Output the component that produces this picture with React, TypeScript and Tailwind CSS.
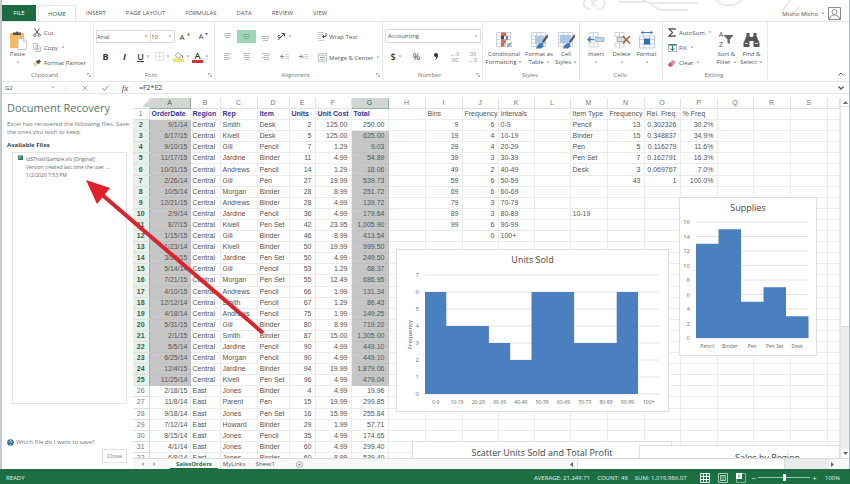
import type { ReactNode } from "react";

const UI = "font-['Open_Sans','Noto_Sans',sans-serif]";
const ARIAL = "font-['Liberation_Sans',Arial,sans-serif]";

type Order = [string, string, string, string, string, string, string];

const orders: Order[] = [
  ["9/1/14", "Central", "Smith", "Desk", "2", "125.00", "250.00"],
  ["6/17/15", "Central", "Kivell", "Desk", "5", "125.00", "625.00"],
  ["9/10/15", "Central", "Gill", "Pencil", "7", "1.29", "9.03"],
  ["11/17/15", "Central", "Jardine", "Binder", "11", "4.99", "54.89"],
  ["10/31/15", "Central", "Andrews", "Pencil", "14", "1.29", "18.06"],
  ["2/26/14", "Central", "Gill", "Pen", "27", "19.99", "539.73"],
  ["10/5/14", "Central", "Morgan", "Binder", "28", "8.99", "251.72"],
  ["12/21/15", "Central", "Andrews", "Binder", "28", "4.99", "139.72"],
  ["2/9/14", "Central", "Jardine", "Pencil", "36", "4.99", "179.64"],
  ["8/7/15", "Central", "Kivell", "Pen Set", "42", "23.95", "1,005.90"],
  ["1/15/15", "Central", "Gill", "Binder", "46", "8.99", "413.54"],
  ["1/23/14", "Central", "Kivell", "Binder", "50", "19.99", "999.50"],
  ["3/24/15", "Central", "Jardine", "Pen Set", "50", "4.99", "249.50"],
  ["5/14/14", "Central", "Gill", "Pencil", "53", "1.29", "68.37"],
  ["7/21/15", "Central", "Morgan", "Pen Set", "55", "12.49", "686.95"],
  ["4/10/15", "Central", "Andrews", "Pencil", "66", "1.99", "131.34"],
  ["12/12/14", "Central", "Smith", "Pencil", "67", "1.29", "86.43"],
  ["4/18/14", "Central", "Andrews", "Pencil", "75", "1.99", "149.25"],
  ["5/31/15", "Central", "Gill", "Binder", "80", "8.99", "719.20"],
  ["2/1/15", "Central", "Smith", "Binder", "87", "15.00", "1,305.00"],
  ["5/5/14", "Central", "Jardine", "Pencil", "90", "4.99", "449.10"],
  ["6/25/14", "Central", "Morgan", "Pencil", "90", "4.99", "449.10"],
  ["12/4/15", "Central", "Jardine", "Binder", "94", "19.99", "1,879.06"],
  ["11/25/14", "Central", "Kivell", "Pen Set", "96", "4.99", "479.04"],
  ["2/18/15", "East", "Jones", "Binder", "4", "4.99", "19.96"],
  ["11/8/14", "East", "Parent", "Pen", "15", "19.99", "299.85"],
  ["9/18/14", "East", "Jones", "Pen Set", "16", "15.99", "255.84"],
  ["7/12/14", "East", "Howard", "Binder", "29", "1.99", "57.71"],
  ["8/15/14", "East", "Jones", "Pencil", "35", "4.99", "174.65"],
  ["4/1/14", "East", "Jones", "Binder", "60", "4.99", "299.40"],
  ["6/8/14", "East", "Jones", "Binder", "60", "8.99", "539.40"],
];

const bins: [string, string, string][] = [
  ["9", "6", "0-9"],
  ["19", "4", "10-19"],
  ["29", "4", "20-29"],
  ["39", "3", "30-39"],
  ["49", "2", "40-49"],
  ["59", "6", "50-59"],
  ["69", "6", "60-69"],
  ["79", "3", "70-79"],
  ["89", "3", "80-89"],
  ["99", "6", "90-99"],
  ["", "0", "100+"],
];

const items: [string, string, string, string][] = [
  ["Pencil", "13", "0.302326", "30.2%"],
  ["Binder", "15", "0.348837", "34.9%"],
  ["Pen", "5", "0.116279", "11.6%"],
  ["Pen Set", "7", "0.162791", "16.3%"],
  ["Desk", "3", "0.069767", "7.0%"],
  ["", "43", "1", "100.0%"],
  ["", "", "", ""],
  ["", "", "", ""],
  ["10-19", "", "", ""],
];

const columns = [
  { id: "A", w: "w-[41px]" },
  { id: "B", w: "w-[30px]" },
  { id: "C", w: "w-[37px]" },
  { id: "D", w: "w-[32px]" },
  { id: "E", w: "w-[26px]" },
  { id: "F", w: "w-[36px]" },
  { id: "G", w: "w-[37px]" },
  { id: "H", w: "w-[37px]" },
  { id: "I", w: "w-[37px]" },
  { id: "J", w: "w-[36px]" },
  { id: "K", w: "w-[36px]" },
  { id: "L", w: "w-[36px]" },
  { id: "M", w: "w-[37px]" },
  { id: "N", w: "w-[37px]" },
  { id: "O", w: "w-[36px]" },
  { id: "P", w: "w-[37px]" },
  { id: "Q", w: "w-[36px]" },
  { id: "R", w: "w-[37px]" },
  { id: "S", w: "w-[37px]" },
  { id: "", w: "" },
];

const headings = [
  "OrderDate", "Region", "Rep", "Item", "Units", "Unit Cost", "Total", "",
  "Bins", "Frequency", "Intervals", "", "Item Type", "Frequency", "Rel. Freq", "% Freq",
];

function cellPadding(i: number): string {
  if (i === 0) return "pr-[2px] text-right";
  if ([4, 5, 6, 8, 9, 13, 14, 15].includes(i)) return "pr-[3px] text-right";
  return "pl-[2px]";
}

function rowCells(i: number): string[] {
  return [...orders[i], "", ...(bins[i] ?? ["", "", ""]), "", ...(items[i] ?? ["", "", "", ""]), "", "", "", ""];
}

function Caret() {
  return (
    <svg width="4" height="3" viewBox="0 0 4 3" className="shrink-0 text-[#999]" aria-hidden="true">
      <path d="M.5.5h3L2 2.300z" fill="currentColor" />
    </svg>
  );
}

function Group({ label, width, launcher = false, children }: { label: string; width: string; launcher?: boolean; children: ReactNode }) {
  return (
    <section aria-label={label} className={`flex shrink-0 flex-col border-r border-[#e9e9e9] pt-[3px] ${width}`}>
      <div className="flex h-[44px]">{children}</div>
      <div className="flex flex-1 items-center pr-[2px]">
        <span className="flex-1 text-center text-[6px] leading-[8px] text-[#777]">{label}</span>
        {launcher && (
          <svg width="4" height="4" viewBox="0 0 4 4" fill="none" stroke="#999" strokeWidth=".7" aria-hidden="true">
            <path d="M.4 2.500V.4h2.100M1.600 1.600l2 2M3.600 1.800v1.800H1.800" />
          </svg>
        )}
      </div>
    </section>
  );
}

function BigButton({ icon, lines, width, caretBelow = false }: { icon: ReactNode; lines: string[]; width: string; caretBelow?: boolean }) {
  return (
    <button type="button" className={`flex shrink-0 flex-col items-center pt-1 text-[6px] leading-[8px] text-[#555] ${width}`}>
      <span className="flex h-[21px] items-center">{icon}</span>
      {lines.map((l, i) => (
        <span key={l} className="flex items-center gap-[2px] whitespace-nowrap">
          {l}
          {!caretBelow && i === 1 && <Caret />}
        </span>
      ))}
      {caretBelow && (
        <span className="flex h-2 items-center">
          <Caret />
        </span>
      )}
    </button>
  );
}

function SmallButton({ icon, label, caret = false }: { icon: ReactNode; label: string; caret?: boolean }) {
  return (
    <button type="button" className="flex h-[15px] shrink-0 items-center gap-[3px] whitespace-nowrap text-[6px] leading-[8px] text-[#555]">
      <span className="flex w-2 justify-center">{icon}</span>
      {label}
      {caret && <Caret />}
    </button>
  );
}

function IconButton({ label, children, width = "w-[19px]", active = false }: { label: string; children: ReactNode; width?: string; active?: boolean }) {
  return (
    <button
      type="button"
      aria-label={label}
      className={`flex h-[13px] shrink-0 items-center justify-center gap-[2px] text-[#333] ${width} ${active ? "bg-[#9fd5b7]" : ""}`}
    >
      {children}
    </button>
  );
}

function Lines({ d }: { d: string }) {
  return (
    <svg width="9" height="9" viewBox="0 0 9 9" fill="none" stroke="#bbb" aria-hidden="true">
      <path d={d} />
    </svg>
  );
}

function GridIcon({ children }: { children?: ReactNode }) {
  return (
    <svg width="18" height="18" viewBox="0 0 18 18" fill="none" aria-hidden="true">
      <path d="M1.500 1.500h14v14h-14zM1.500 5h14M1.500 8.500h14M1.500 12h14M6.500 1.500v14M11 1.500v14" stroke="#c4c9ce" strokeWidth=".8" />
      {children}
    </svg>
  );
}

function Clipboard() {
  return (
    <Group label="Clipboard" width="w-[92px]" launcher>
      <BigButton
        width="w-[31px]"
        lines={["Paste"]}
        caretBelow
        icon={
          <svg width="18" height="20" viewBox="0 0 18 20" aria-hidden="true">
            <rect x="1" y="3" width="14" height="15" rx="1" fill="#f0bc6c" />
            <path d="M4 5V2.500h2.500a1.600 1.600 0 0 1 3 0H12V5z" fill="#555" />
            <path d="M9 8.500h5.500l3 3v8H9z" fill="#fff" stroke="#b8b8b8" strokeWidth=".7" />
            <path d="M14.500 8.500v3h3" fill="none" stroke="#b8b8b8" strokeWidth=".7" />
          </svg>
        }
      />
      <div className="flex flex-col">
        <SmallButton
          label="Cut"
          icon={
            <svg width="8" height="9" viewBox="0 0 8 9" fill="none" stroke="#555" aria-hidden="true">
              <path d="M1.500.5 5.500 6M6.500.5 2.500 6" />
              <circle cx="1.800" cy="7.200" r="1.200" strokeWidth=".8" />
              <circle cx="6.200" cy="7.200" r="1.200" strokeWidth=".8" />
            </svg>
          }
        />
        <SmallButton
          label="Copy"
          caret
          icon={
            <svg width="8" height="9" viewBox="0 0 8 9" fill="#fff" stroke="#aaa" strokeWidth=".7" aria-hidden="true">
              <path d="M.5.5h4v5.500h-4zM3 2.500h3l1.500 1.500v4.500H3zM4 5h2.500M4 6.700h2.500" />
            </svg>
          }
        />
        <SmallButton
          label="Format Painter"
          icon={
            <svg width="8" height="8" viewBox="0 0 8 8" aria-hidden="true">
              <path d="M0 4.500 2.500 3l2 2.500L2 8z" fill="#ecd88a" />
              <path d="m2.500 2.500 3 3L8 2.200 6.300.5z" fill="#555" />
            </svg>
          }
        />
      </div>
    </Group>
  );
}

function FontGroup() {
  return (
    <Group label="Font" width="w-[121px]" launcher>
      <div className="flex flex-col gap-[7px] pt-[5px] pl-[2px]">
        <div className="flex">
          <div className="flex h-[13px] w-[55px] items-center border border-[#ddd] pr-[2px]">
            <select aria-label="Font family" className="w-full min-w-0 appearance-none bg-transparent text-[6px] leading-[8px] text-[#555]">
              <option>Arial</option>
            </select>
            <Caret />
          </div>
          <div className="-ml-px flex h-[13px] w-[25px] items-center border border-[#ddd] pr-[2px]">
            <select aria-label="Font size" className="w-full min-w-0 appearance-none bg-transparent text-[6px] leading-[8px] text-[#555]">
              <option>10</option>
            </select>
            <Caret />
          </div>
          <IconButton label="Increase font size">
            <span className="text-[8px] leading-[8px]">A</span>
            <svg width="3" height="8" viewBox="0 0 3 8" fill="#667" aria-hidden="true"><path d="M0 2.500h3L1.500 0z" /></svg>
          </IconButton>
          <IconButton label="Decrease font size">
            <span className="text-[7px] leading-[8px]">A</span>
            <svg width="3" height="8" viewBox="0 0 3 8" fill="#667" aria-hidden="true"><path d="M0 0h3L1.500 2.500z" /></svg>
          </IconButton>
        </div>
        <div className="flex">
          <IconButton label="Bold"><span className="text-[9px] leading-[10px] font-bold">B</span></IconButton>
          <IconButton label="Italic"><span className="text-[9px] leading-[10px] font-bold italic">I</span></IconButton>
          <IconButton label="Underline"><span className="text-[9px] leading-[10px] font-semibold underline">U</span><Caret /></IconButton>
          <IconButton label="Borders">
            <svg width="9" height="9" viewBox="0 0 9 9" fill="none" stroke="#ccc" strokeDasharray="1 1" aria-hidden="true"><path d="M.5.5h8v8h-8zM4.500.5v8M.5 4.500h8" /></svg>
            <Caret />
          </IconButton>
          <IconButton label="Fill colour">
            <svg width="11" height="11" viewBox="0 0 11 11" className="shrink-0" aria-hidden="true">
              <path d="m2 4.500 3-3 3.500 3.500-3 2.500z" fill="#fff" stroke="#888" strokeWidth=".8" />
              <path d="M8.500 4c1 1 1.500 2 1 3" stroke="#555" fill="none" />
              <path d="M0 7.500h11V11H0z" fill="#efe468" />
            </svg>
            <Caret />
          </IconButton>
          <IconButton label="Font colour">
            <span className="flex h-[12px] w-[11px] shrink-0 justify-center border-b-[3px] border-[#c8343a] text-[9px] leading-[10px] font-semibold">A</span>
            <Caret />
          </IconButton>
        </div>
      </div>
    </Group>
  );
}

function Alignment() {
  return (
    <Group label="Alignment" width="w-[168px]" launcher>
      <div className="flex flex-col gap-[7px] pt-[5px] pl-[3px]">
        <div className="flex">
          <IconButton label="Top align"><Lines d="M1 1.500h7M1 3.500h7M2 5.500h5" /></IconButton>
          <IconButton label="Middle align" active>
            <svg width="9" height="9" viewBox="0 0 9 9" fill="none" stroke="#7fae95" aria-hidden="true"><path d="M1 2.500h7M1 4.500h7M2 6.500h5" /></svg>
          </IconButton>
          <IconButton label="Bottom align"><Lines d="M1 4.500h7M1 6.500h7M2 8.500h5" /></IconButton>
          <IconButton label="Orientation">
            <svg width="9" height="9" viewBox="0 0 9 9" fill="none" stroke="#555" aria-hidden="true">
              <path d="m1 8 6.500-6.500M4.500 1.500h3v3" />
              <circle cx="2" cy="4.500" r="1.200" strokeWidth=".8" />
            </svg>
            <Caret />
          </IconButton>
        </div>
        <div className="flex">
          <IconButton label="Align left"><Lines d="M1 1.500h7M1 3.500h5M1 5.500h7M1 7.500h5" /></IconButton>
          <IconButton label="Centre"><Lines d="M1 1.500h7M2 3.500h5M1 5.500h7M2 7.500h5" /></IconButton>
          <IconButton label="Align right"><Lines d="M1 1.500h7M3 3.500h5M1 5.500h7M3 7.500h5" /></IconButton>
          <IconButton label="Decrease indent">
            <svg width="9" height="7" viewBox="0 0 9 7" fill="none" stroke="#888" aria-hidden="true"><path d="M4 3.500H.8M2.500 1.500l-2 2 2 2" /><path d="M5.500 1.500H9M5.500 3.500H9M5.500 5.500H9" stroke="#ccc" /></svg>
          </IconButton>
          <IconButton label="Increase indent">
            <svg width="9" height="7" viewBox="0 0 9 7" fill="none" stroke="#888" aria-hidden="true"><path d="M0 3.500h3.500M2 1.500l2 2-2 2" /><path d="M5.500 1.500H9M5.500 3.500H9M5.500 5.500H9" stroke="#ccc" /></svg>
          </IconButton>
        </div>
      </div>
      <div className="flex flex-col gap-[6px] pt-1 pl-[5px]">
        <SmallButton
          label="Wrap Text"
          icon={
            <svg width="9" height="9" viewBox="0 0 9 9" fill="none" className="shrink-0" aria-hidden="true">
              <path d="M0 .5h6M0 2.500h5M0 4.500h3M0 6.500h3M0 8.500h6" stroke="#ccc" />
              <path d="M8 1v3.500H4.500M6 3 4.500 4.500 6 6" stroke="#555" />
            </svg>
          }
        />
        <SmallButton
          label="Merge & Center"
          caret
          icon={
            <svg width="9" height="9" viewBox="0 0 9 9" fill="none" className="shrink-0" aria-hidden="true">
              <path d="M.5.500h8v8h-8zM.5 2.500h8M.5 6.500h8M4.500.5v2M4.500 6.500v2" stroke="#bbb" strokeWidth=".8" />
              <path d="M2 4.500h5" stroke="#8aa4c0" />
            </svg>
          }
        />
      </div>
    </Group>
  );
}

function NumberGroup() {
  return (
    <Group label="Number" width="w-[100px]" launcher>
      <div className="flex flex-col gap-[7px] pt-1 pl-[2px]">
        <div className="flex h-[14px] w-[96px] items-center border border-[#ddd] px-[2px]">
          <select aria-label="Number format" className="w-full min-w-0 appearance-none bg-transparent text-[6px] leading-[8px] text-[#555]">
            <option>Accounting</option>
          </select>
          <Caret />
        </div>
        <div className="flex">
          <IconButton label="Accounting format" width="w-[22px]"><span className="text-[9px] leading-[10px] font-semibold">$</span><Caret /></IconButton>
          <IconButton label="Percent"><span className="text-[9px] leading-[10px]">%</span></IconButton>
          <IconButton label="Comma style">
            <svg width="4" height="7" viewBox="0 0 4 7" fill="#333" aria-hidden="true"><circle cx="2" cy="2" r="2" /><path d="M4 2c0 2-1 4-3 5 1-1.500 1.200-2.500 1-3.500z" /></svg>
          </IconButton>
          <IconButton label="Increase decimal">
            <span className="flex flex-col text-[5px] leading-[6px] text-[#777]"><span>←.0</span><span>.00</span></span>
          </IconButton>
          <IconButton label="Decrease decimal" width="w-[17px]">
            <span className="flex flex-col text-[5px] leading-[6px] text-[#777]"><span>.00</span><span>→.0</span></span>
          </IconButton>
        </div>
      </div>
    </Group>
  );
}

function Styles() {
  return (
    <Group label="Styles" width="w-[97px]">
      <BigButton
        width="w-[42px]"
        lines={["Conditional", "Formatting"]}
        icon={
          <GridIcon>
            <path d="M6 1.500h5V5H6zM6 12h3.500v3.500H6z" fill="#c8694a" />
            <path d="M6 5h3v3.500H6z" fill="#444" />
            <path d="M6 8.500h5V12H6z" fill="#d47a5c" />
            <path d="M11 5h2v4h-2z" fill="#5a8bc0" />
            <path d="M11 10.500h6.500v7H11z" fill="#fff" />
            <path d="m12 16.500 4.500-5M12 13h4.500M12 15h4.500" stroke="#5a8bc0" />
          </GridIcon>
        }
      />
      <BigButton
        width="w-[28px]"
        lines={["Format as", "Table"]}
        icon={
          <GridIcon>
            <path d="M5 5h11v8H5z" fill="#a9c6e6" />
            <path d="M17.500 3 12 10.500l1.500 1.500L18 6z" fill="#555" />
            <path d="M6 17.500c1-3.500 3.500-6 6-5.500 2.500.5 1.500 4.500-1 5.500z" fill="#3f78b5" />
          </GridIcon>
        }
      />
      <BigButton
        width="w-[26px]"
        lines={["Cell", "Styles"]}
        icon={
          <GridIcon>
            <path d="M3 4h11v8H3z" fill="#a9c6e6" />
            <path d="M17.500 3 12 10.500l1.500 1.500L18 6z" fill="#555" />
            <path d="M6 17.500c1-3.500 3.500-6 6-5.500 2.500.5 1.500 4.500-1 5.500z" fill="#3f78b5" />
          </GridIcon>
        }
      />
    </Group>
  );
}

function Cells() {
  return (
    <Group label="Cells" width="w-[83px]">
      <div className="w-[3px] shrink-0" />
      <BigButton
        width="w-[26px]"
        lines={["Insert"]}
        caretBelow
        icon={
          <svg width="18" height="18" viewBox="0 0 18 18" fill="none" aria-hidden="true">
            <path d="M2 1.500h9v4H2zM2 12h9v4H2zM6.500 1.500v4M6.500 12v4" stroke="#c4c9ce" strokeWidth=".8" />
            <path d="M8 6.500h9v4H8z" fill="#bcd2ea" stroke="#8fb0d4" strokeWidth=".8" />
            <path d="M7 8.500H1M3.500 6 1 8.500 3.500 11" stroke="#3f78b5" strokeWidth="1.300" />
          </svg>
        }
      />
      <BigButton
        width="w-[25px]"
        lines={["Delete"]}
        caretBelow
        icon={
          <svg width="18" height="18" viewBox="0 0 18 18" fill="none" aria-hidden="true">
            <path d="M2 1.500h9v4H2zM2 12h9v4H2zM6.500 1.500v4M6.500 12v4" stroke="#c4c9ce" strokeWidth=".8" />
            <path d="M4 6.500h8v4H4z" fill="#d9dde1" stroke="#999" strokeWidth=".8" />
            <path d="m10 5 7 7.500M17 5l-7 7.500" stroke="#b9572f" strokeWidth="1.500" />
          </svg>
        }
      />
      <BigButton
        width="w-[25px]"
        lines={["Format"]}
        caretBelow
        icon={
          <svg width="18" height="18" viewBox="0 0 18 18" fill="none" aria-hidden="true">
            <path d="M3.500 1.500h11M5.500 0l-2 1.500 2 1.500M12.500 0l2 1.500-2 1.500" stroke="#3f78b5" />
            <path d="M1.500 5h15v12h-15zM1.500 8.500h15M1.500 13h15M6 5v12M12 5v12" stroke="#a9c6e6" strokeWidth=".8" />
            <path d="M6 7.500h6v6H6z" fill="#2f6fad" />
          </svg>
        }
      />
    </Group>
  );
}

function Editing() {
  return (
    <Group label="Editing" width="w-[105px]">
      <div className="flex w-[50px] shrink-0 flex-col pl-[5px] whitespace-nowrap">
        <SmallButton label="AutoSum" caret icon={<svg width="8" height="9" viewBox="0 0 8 9" fill="none" stroke="#444" strokeWidth="1.200" aria-hidden="true"><path d="M7 2V.8H1L4.500 4.500 1 8.200h6V7" /></svg>} />
        <SmallButton label="Fill" caret icon={<svg width="9" height="8" viewBox="0 0 9 8" fill="none" className="shrink-0" aria-hidden="true"><path d="M.5 1h8v6.500h-8z" stroke="#999" strokeWidth=".7" /><path d="M.5.8h8" stroke="#2f7f76" strokeWidth="1.500" /><path d="M4.500 1.500v5M2.500 4.500l2 2 2-2" stroke="#2f7f76" /></svg>} />
        <SmallButton label="Clear" caret icon={<svg width="8" height="8" viewBox="0 0 8 8" aria-hidden="true"><path d="M0 5.500 4.500 1 8 3 3.500 7.500H1z" fill="#e58aa4" /><path d="M0 5.500 2 3.500 5 6 3.500 7.500H1z" fill="#c75878" /></svg>} />
      </div>
      <BigButton
        width="w-[27px]"
        lines={["Sort &", "Filter"]}
        icon={
          <span className="flex items-center">
            <span className="flex flex-col text-[7px] leading-[10px] text-[#555]"><span>A</span><span>Z</span></span>
            <svg width="11" height="11" viewBox="0 0 11 11" fill="#666" aria-hidden="true"><path d="M.5 1h10L6.800 5.500V10L4.500 9V5.500z" /></svg>
          </span>
        }
      />
      <BigButton
        width="w-[23px]"
        lines={["Find &", "Select"]}
        icon={
          <svg width="17" height="16" viewBox="0 0 17 16" fill="#555" aria-hidden="true">
            <path d="M3.500 1h3v3l1 1h2l1-1V1h3v3l3 7v4H10.500V9h-4v6H.5v-4l3-7z" />
            <path d="M2 11.500h3M12 11.500h3" stroke="#fff" strokeWidth=".8" />
          </svg>
        }
      />
    </Group>
  );
}

const tabs = ["INSERT", "PAGE LAYOUT", "FORMULAS", "DATA", "REVIEW", "VIEW"];

function TitleTabs() {
  return (
    <div className="relative flex h-[21px] shrink-0 items-end">
      <svg className="absolute top-0 right-[50px]" width="250" height="21" viewBox="0 0 250 21" fill="none" stroke="#e9e9e9" strokeWidth="2" aria-hidden="true">
        <path d="M37 0c-5 3-1 9 5 9M54 0c4 4 0 9-6 9M43 0v6M43 3l5-3M43 3l5 4M69 2h30l12 8h28M93 0l8 3h48M168 0c3 6 18 8 25 0M232 12l10-12M246 12l4-5" />
      </svg>
      <button type="button" className="h-4 w-[34px] bg-[#1c6b41] text-[6px] leading-[8px] text-white">FILE</button>
      <nav className="relative flex h-4 text-[6px] leading-[8px] text-[#555]">
        <button type="button" className="ml-[2px] w-[38px] border-x border-t border-[#e8e8e8] bg-white text-[#1c6b41]">HOME</button>
        {tabs.map((t) => (
          <button type="button" key={t} className="px-[10px]">{t}</button>
        ))}
      </nav>
      <div className="relative ml-auto flex items-center gap-[3px] pr-2 pb-px text-[6px] leading-[8px] text-[#555]">
        Misho Misho
        <Caret />
        <svg width="13" height="13" viewBox="0 0 13 13" fill="none" stroke="#8a8a8a" aria-hidden="true">
          <path d="M.5.5h12v12H.5z" />
          <circle cx="6.500" cy="5" r="2.500" />
          <path d="M1.500 12c.5-3 2.500-4 5-4s4.500 1 5 4" />
        </svg>
      </div>
    </div>
  );
}

function FormulaBar() {
  return (
    <div className="flex h-[12px] shrink-0 items-center border-b border-[#e6e6e6]">
      <div className="flex w-[55px] items-center pr-[2px] pl-[3px]">
        <input aria-label="Name box" defaultValue="G2" className="w-full min-w-0 text-[6px] leading-[8px] text-[#555] outline-none" />
        <Caret />
      </div>
      <div className="flex h-full flex-1 items-center">
        <span className="w-[18px] text-center text-[6px] leading-[8px] text-[#bbb]">⋮</span>
        <button type="button" aria-label="Cancel" className="flex w-5 justify-center">
          <svg width="6" height="6" viewBox="0 0 6 6" stroke="#aaa" aria-hidden="true"><path d="m.5.5 5 5M5.500.5l-5 5" /></svg>
        </button>
        <button type="button" aria-label="Enter" className="flex w-5 justify-center">
          <svg width="7" height="6" viewBox="0 0 7 6" fill="none" stroke="#999" aria-hidden="true"><path d="m.5 3 2 2.500L6.500.5" /></svg>
        </button>
        <button type="button" aria-label="Insert function" className="w-5 font-['Liberation_Serif',serif] text-[9px] leading-[10px] text-[#444] italic">fx</button>
        <input aria-label="Formula" defaultValue="=F2*E2" className="ml-1 min-w-0 flex-1 text-[7px] leading-[8px] text-[#444] outline-none" />
        <button type="button" aria-label="Expand formula bar" className="px-[5px]">
          <svg width="6" height="4" viewBox="0 0 6 4" fill="none" stroke="#555" strokeWidth="1.300" aria-hidden="true"><path d="m.5.5 2.500 2.500L5.500.5" /></svg>
        </button>
      </div>
    </div>
  );
}

function RecoveryPane() {
  return (
    <aside className="flex w-[131px] shrink-0 flex-col pt-[3px] pr-[6px] pl-[5px] text-[#777]">
      <h1 className="text-[11px] leading-[14px] whitespace-nowrap text-[#56796a]">Document Recovery</h1>
      <p className="mt-[5px] text-[6px] leading-[8px] whitespace-nowrap">
        Excel has recovered the following files. Save
        <br />
        the ones you wish to keep.
      </p>
      <h2 className="mt-[5px] text-[6px] leading-[8px] font-bold text-[#444]">Available Files</h2>
      <ul className="mt-[3px] ml-[5px] flex-1 border border-[#e6e6e6] p-[2px] pl-[5px]">
        <li className="flex gap-[3px] text-[5px] leading-[8px] whitespace-nowrap text-[#666]">
          <svg width="5" height="5" viewBox="0 0 5 5" aria-hidden="true" className="shrink-0">
            <path d="M0 .5h5V5H0z" fill="#2b7a55" />
            <path d="m1 1.500 2 2M3 1.500l-2 2" stroke="#fff" strokeWidth=".6" />
          </svg>
          <span>
            idSTnskl\Sample.xls [Original]
            <br />
            Version created last time the user ...
            <br />
            1/2/2020 7:53 PM
          </span>
        </li>
      </ul>
      <a href="#help" className="mt-[34px] flex items-center gap-[2px] text-[6px] leading-[8px] whitespace-nowrap">
        <svg width="7" height="7" viewBox="0 0 7 7" className="shrink-0" aria-hidden="true">
          <circle cx="3.500" cy="3.500" r="3.300" fill="#3a6d9a" />
          <path d="M2.400 2.600c.1-1.300 2.300-1.200 2.200 0 0 .8-1.100.8-1.100 1.600M3.500 5v.7" stroke="#fff" strokeWidth=".8" fill="none" />
        </svg>
        Which file do I want to save?
      </a>
      <button type="button" className="mt-[3px] mb-[6px] h-[14px] w-[25px] self-end border border-[#e0e0e0] text-[6px] leading-[8px]">Close</button>
    </aside>
  );
}

function BarChart({
  title, width, height, left, base, band, unit, max, step, values, labels, yTitle,
}: {
  title: string; width: number; height: number; left: number; base: number; band: number; unit: number; max: number; step: number; values: number[]; labels: string[]; yTitle?: string;
}) {
  const ticks = Array.from({ length: max / step + 1 }, (_, i) => i * step);
  const right = left + band * values.length;
  const path = values.map((v, i) => `V${base - v * unit}H${left + band * (i + 1)}`).join("");
  return (
    <svg width={width} height={height} viewBox={`0 0 ${width} ${height}`} role="img" aria-label={title} className={`block ${UI}`}>
      <text x={width / 2} y="13" textAnchor="middle" className="fill-[#444] text-[9px]">{title}</text>
      {ticks.map((t) => (
        <g key={t}>
          <path d={`M${left} ${base - t * unit}H${right}`} stroke="#e2e2e2" />
          <text x={left - 6} y={base - t * unit + 2} textAnchor="end" className="fill-[#777] text-[6px]">{t}</text>
        </g>
      ))}
      <path d={`M${left} ${base}${path}V${base}z`} fill="#4a7fc0" />
      {labels.map((l, i) => (
        <text key={l} x={left + band * (i + 0.5)} y={base + 10} textAnchor="middle" className="fill-[#666] text-[5px]">{l}</text>
      ))}
      {yTitle && (
        <text transform={`translate(15 ${height / 2 + 4}) rotate(-90)`} textAnchor="middle" className="fill-[#555] text-[6px]">{yTitle}</text>
      )}
    </svg>
  );
}

function Sheet() {
  return (
    <div className="relative min-w-0 flex-1 overflow-hidden">
      <table className={`h-[366px] w-full table-fixed border-collapse text-[7px] leading-[10px] text-[#555] ${ARIAL}`}>
        <colgroup>
          <col className="w-4" />
          {columns.map((c) => (
            <col key={c.id} className={c.w} />
          ))}
        </colgroup>
        <thead>
          <tr>
            <th aria-label="Select all" className="border-r border-b border-[#dcdcdc] p-0">
              <svg width="7" height="7" viewBox="0 0 7 7" className="ml-auto block" aria-hidden="true"><path d="M7 0v7H0z" fill="#d4d4d4" /></svg>
            </th>
            {columns.map((c) => {
              const on = c.id === "A" || c.id === "G";
              return (
                <th
                  key={c.id}
                  scope="col"
                  className={`border-r border-b p-0 font-normal ${on ? "border-[#8fb5a0] bg-[#d2d6d3] text-[#2b6446]" : "border-[#e3e3e3] text-[#777]"}`}
                >
                  {c.id}
                </th>
              );
            })}
          </tr>
        </thead>
        <tbody>
          <tr>
            <th scope="row" className="border-r border-b border-[#dcdcdc] p-0 font-normal text-[#777]">1</th>
            {columns.map((c, i) => (
              <td
                key={c.id}
                className={`overflow-visible border-r border-b border-[#ececec] p-0 pl-[2px] whitespace-nowrap ${i < 7 ? "font-bold text-[#35359a]" : ""}`}
              >
                {headings[i] ?? ""}
              </td>
            ))}
          </tr>
          {orders.map((_, r) => {
            const selected = r < 24;
            return (
              <tr key={r}>
                <th
                  scope="row"
                  className={`border-r border-b p-0 ${selected ? "border-[#d9e3dc] border-r-[#8fb5a0] bg-[#e9efeb] font-bold text-[#2b6446]" : "border-[#dcdcdc] font-normal text-[#777]"}`}
                >
                  {r + 2}
                </th>
                {rowCells(r).map((v, i) => {
                  const gray = selected && (i === 0 || i === 6) && !(r === 0 && i === 6);
                  return (
                    <td
                      key={i}
                      className={`border-r border-b p-0 whitespace-nowrap ${gray ? "border-[#c0c0c0] bg-[#c6c6c6]" : "border-[#ececec]"} ${cellPadding(i)}`}
                    >
                      {v}
                    </td>
                  );
                })}
              </tr>
            );
          })}
        </tbody>
      </table>

      <div className="absolute top-[151px] left-[263px] border border-[#dedede] bg-white">
        <BarChart
          title="Units Sold" width={271} height={161} left={28} base={144} band={21.3} unit={17} max={7} step={1}
          values={[6, 4, 4, 3, 2, 6, 6, 3, 3, 6, 0]}
          labels={["0-9", "10-19", "20-29", "30-39", "40-49", "50-59", "60-69", "70-79", "80-89", "90-99", "100+"]}
          yTitle="Frequency"
        />
      </div>
      <div className="absolute top-[99px] left-[546px] border border-[#dedede] bg-white">
        <BarChart
          title="Supplies" width={136} height={157} left={16} base={140} band={22.5} unit={7.25} max={16} step={2}
          values={[13, 15, 5, 7, 3]}
          labels={["Pencil", "Binder", "Pen", "Pen Set", "Desk"]}
        />
      </div>
      <div className="absolute top-[343px] left-[279px] h-20 w-[260px] border border-[#dedede] bg-white pt-[5px] text-center text-[9px] leading-[12px] text-[#444]">
        Scatter Units Sold and Total Profit
      </div>
      <div className="absolute top-[347px] right-0 left-[506px] h-20 border border-[#dedede] bg-white pt-[6px] pl-[56px] text-center text-[9px] leading-[12px] text-[#444]">
        Sales by Region
      </div>
    </div>
  );
}

function VerticalScroll() {
  return (
    <div className="flex w-[9px] shrink-0 flex-col border-l border-[#e3e3e3] bg-[#eeeeee]">
      <button type="button" aria-label="Scroll up" className="flex h-[9px] items-center justify-center border-b border-[#e3e3e3] bg-white">
        <svg width="5" height="3" viewBox="0 0 5 3" fill="#666" aria-hidden="true"><path d="M0 3h5L2.500 0z" /></svg>
      </button>
      <div className="flex-[220] border-b border-[#dcdcdc] bg-white" />
      <div className="flex-[122]" />
      <button type="button" aria-label="Scroll down" className="flex h-[9px] items-center justify-center bg-white">
        <svg width="5" height="3" viewBox="0 0 5 3" fill="#666" aria-hidden="true"><path d="M0 0h5L2.500 3z" /></svg>
      </button>
    </div>
  );
}

function SheetTabs() {
  return (
    <div className="flex h-[11px] shrink-0 items-stretch border-t border-[#dcdcdc] bg-[#f8f8f8] text-[6px] leading-[8px] text-[#555]">
      <div className="flex w-[37px] items-center gap-[9px] pl-2 text-[#bbb]">
        <svg width="3" height="4" viewBox="0 0 3 4" fill="currentColor" aria-hidden="true"><path d="M3 0v4L0 2z" /></svg>
        <svg width="3" height="4" viewBox="0 0 3 4" fill="currentColor" aria-hidden="true"><path d="M0 0v4l3-2z" /></svg>
      </div>
      <button type="button" className="border-b border-[#1c6b41] bg-white px-[6px] font-bold text-[#1c6b41]">SalesOrders</button>
      <button type="button" className="px-[5px]">MyLinks</button>
      <button type="button" className="px-[5px]">Sheet1</button>
      <button type="button" aria-label="New sheet" className="flex items-center pl-4">
        <svg width="7" height="7" viewBox="0 0 7 7" fill="none" stroke="#888" strokeWidth=".7" aria-hidden="true"><circle cx="3.500" cy="3.500" r="3" /><path d="M3.500 2v3M2 3.500h3" /></svg>
      </button>
      <div className="ml-auto flex w-[284px] items-center">
        <button type="button" aria-label="Scroll left" className="flex w-3 justify-center">
          <svg width="3" height="5" viewBox="0 0 3 5" fill="#666" aria-hidden="true"><path d="M3 0v5L0 2.500z" /></svg>
        </button>
        <div className="h-full flex-1 border-x border-[#dcdcdc] bg-white" />
        <div className="h-full w-[44px] bg-[#eaeaea]" />
        <button type="button" aria-label="Scroll right" className="flex w-[20px] pl-[2px]">
          <svg width="3" height="5" viewBox="0 0 3 5" fill="#666" aria-hidden="true"><path d="M0 0v5l3-2.500z" /></svg>
        </button>
      </div>
    </div>
  );
}

function StatusBar() {
  return (
    <footer className="flex h-[15px] shrink-0 items-center bg-[#1c6f43] pt-[2px] pr-[10px] pl-[6px] text-[6px] leading-[8px] text-[#e6f2ea]">
      <span>READY</span>
      <div className="ml-auto flex items-center gap-[7px]">
        <span>AVERAGE: 21,249.71</span>
        <span>COUNT: 48</span>
        <span>SUM: 1,019,986.07</span>
      </div>
      <div className="ml-[13px] flex items-center gap-2">
        <button type="button" aria-label="Normal view">
          <svg width="10" height="10" viewBox="0 0 10 10" fill="none" stroke="#fff" strokeWidth=".9" className="block" aria-hidden="true"><path d="M.5.5h9v9h-9zM.5 3.500h9M.5 6.500h9M3.500.5v9M6.500.5v9" /></svg>
        </button>
        <button type="button" aria-label="Page layout view">
          <svg width="10" height="10" viewBox="0 0 10 10" fill="none" stroke="#cfe5d8" strokeWidth=".8" className="block" aria-hidden="true"><path d="M.5.5h9v9h-9zM2.500 2.500h5v5h-5zM3.500 4h3M3.500 6h3" /></svg>
        </button>
        <button type="button" aria-label="Page break view">
          <svg width="10" height="10" viewBox="0 0 10 10" fill="none" className="block" aria-hidden="true"><path d="M.5.5h9v9h-9z" stroke="#9cc9af" strokeWidth=".8" /><path d="M0 0h6v6H0z" fill="#fff" /><path d="M3 1.500v3" stroke="#1c6f43" /></svg>
        </button>
      </div>
      <div className="ml-[6px] flex items-center gap-[2px]">
        <button type="button" aria-label="Zoom out" className="text-[8px]">−</button>
        <input
          type="range"
          aria-label="Zoom"
          min={10}
          max={190}
          defaultValue={100}
          className="h-[9px] w-[52px] appearance-none bg-transparent [&::-webkit-slider-runnable-track]:h-px [&::-webkit-slider-runnable-track]:bg-[#9cc9af] [&::-webkit-slider-thumb]:-mt-[3px] [&::-webkit-slider-thumb]:h-[7px] [&::-webkit-slider-thumb]:w-[3px] [&::-webkit-slider-thumb]:appearance-none [&::-webkit-slider-thumb]:bg-white"
        />
        <button type="button" aria-label="Zoom in" className="text-[8px]">+</button>
        <span className="ml-[6px]">100%</span>
      </div>
    </footer>
  );
}

export default function App() {
  return (
    <div className={`relative flex h-screen flex-col overflow-hidden bg-white ${UI}`}>
      <div className="flex min-h-0 flex-1 flex-col border-r border-l-2 border-r-[#8cc4d6] border-l-[#c3cacb]">
        <TitleTabs />
        <div className="flex h-[61px] shrink-0 border-y border-[#e6e6e6]">
          <Clipboard />
          <FontGroup />
          <Alignment />
          <NumberGroup />
          <Styles />
          <Cells />
          <Editing />
          <button type="button" aria-label="Collapse ribbon" className="ml-auto self-end px-[5px] pb-[5px]">
            <svg width="6" height="4" viewBox="0 0 6 4" fill="none" stroke="#666" aria-hidden="true"><path d="M.5 3.500 3 1l2.500 2.500" /></svg>
          </button>
        </div>
        <FormulaBar />
        <div className="flex min-h-0 flex-1 pt-1">
          <RecoveryPane />
          <main className="flex min-w-0 flex-1 flex-col">
            <div className="flex min-h-0 flex-1">
              <Sheet />
              <VerticalScroll />
            </div>
            <SheetTabs />
          </main>
        </div>
      </div>
      <StatusBar />
      <svg className="pointer-events-none absolute top-[180px] left-[86px]" width="180" height="158" viewBox="0 0 180 158" aria-hidden="true">
        <path d="M14 13 177 153" stroke="#d6252d" strokeWidth="4" />
        <path d="M0 0 24 8 11 24z" fill="#e0202a" />
      </svg>
    </div>
  );
}
